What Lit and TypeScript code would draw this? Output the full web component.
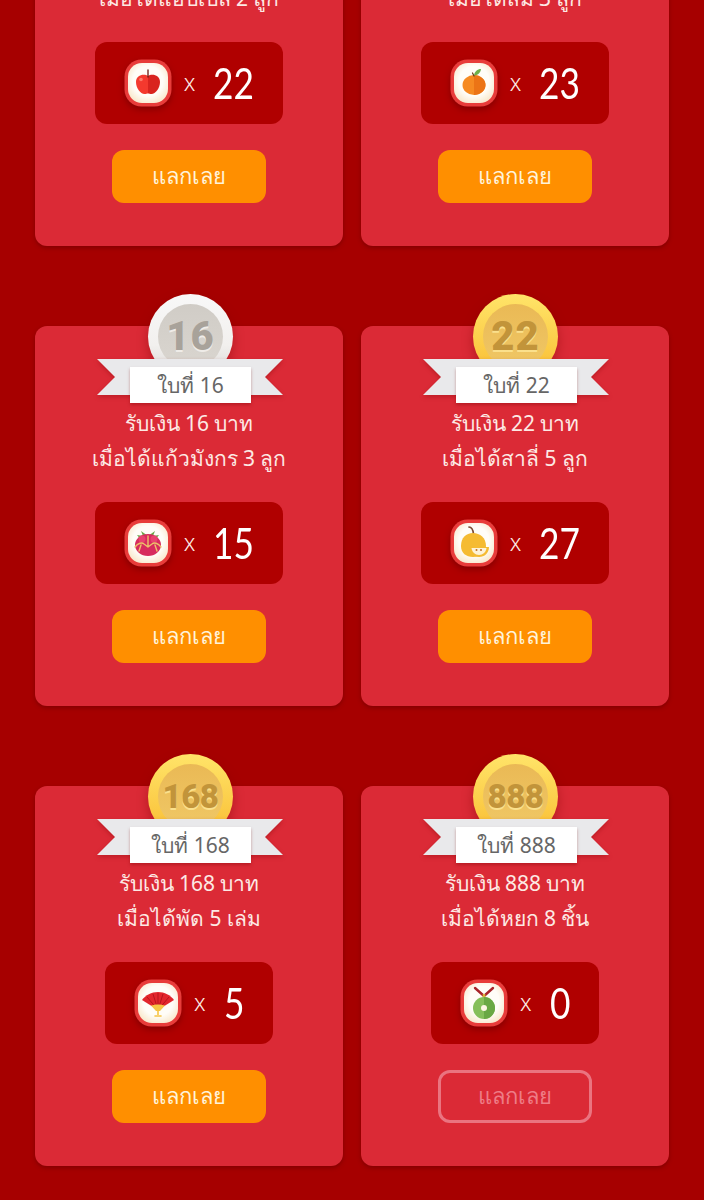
import { LitElement, html, css, svg } from "lit";
import { customElement } from "lit/decorators.js";

type Reward = {
  no?: string;
  tier?: "silver" | "gold";
  lines: string[];
  item: string;
  count: string;
  off?: boolean;
};

const icons: Record<string, unknown> = {
  apple: svg`
    <path d="M24 17c-3-2.500-12-2-12 6 0 6 4.500 12 8.500 12 1.500 0 2.500-.6 3.500-.6z" fill="#f4392e"/>
    <path d="M24 17c3-2.500 12-2 12 6 0 6-4.500 12-8.500 12-1.500 0-2.500-.6-3.500-.6z" fill="#d9241f"/>
    <circle cx="17" cy="20.500" r="1.800" fill="#fb7a6c"/>
    <path d="M24 11v7" stroke="#6a1a12" stroke-width="1.300" stroke-linecap="round"/>`,
  orange: svg`
    <ellipse cx="24" cy="26" rx="11.500" ry="10" fill="#f68a22"/>
    <path d="M24 16c6.500 0 11.500 4.500 11.500 10S30.500 36 24 36z" fill="#ec7416"/>
    <path d="M24 16.500c.5-4 3.500-6.500 7-6.500-.5 4-3.500 6.500-7 6.500z" fill="#6fb04a"/>
    <path d="M22.500 14l1.500 3" stroke="#6a3a1a" stroke-width="1.200" stroke-linecap="round"/>`,
  dragon: svg`
    <path d="M24 17l-7-5 2 5-6-1 4 5h14l4-5-6 1 2-5z" fill="#6aa84a"/>
    <ellipse cx="24" cy="26" rx="13" ry="11" fill="#d72b5e"/>
    <circle cx="18" cy="20" r="3.500" fill="#e8426f"/>
    <circle cx="30" cy="20" r="3.500" fill="#e8426f"/>
    <path d="M11 28c3-4 7-5 9-3l4 3 4-3c2-2 6-1 9 3M17 26l-2 6M31 26l2 6M24 17v11" fill="none" stroke="#edc06a" stroke-width="1.400" stroke-linecap="round" stroke-linejoin="round"/>`,
  pear: svg`
    <path d="M19 8c2.500 0 4 2.500 4.500 7" fill="none" stroke="#7a4a32" stroke-width="1.700" stroke-linecap="round"/>
    <path d="M23 14c7 0 13 5 13 13 0 6-6 11-13 11s-12-4-12-11c0-8 5-13 12-13z" fill="#f5bb32"/>
    <path d="M19 28h20c0 6-4.500 10-10 10s-10-4-10-10z" fill="#f5bb32"/>
    <path d="M21.500 29h15c-.5 4-3.500 7-7.500 7s-7-3-7.500-7z" fill="#fdf3d8"/>
    <circle cx="26.500" cy="31" r="1" fill="#c0702a"/><circle cx="31" cy="31" r="1" fill="#c0702a"/>`,
  fan: svg`
    <path d="M24 31L8 21c3.500-5 9.500-8 16-8s12.500 3 16 8z" fill="#e2262c"/>
    <path d="M24 31l-11-13M24 31l-5-16M24 31V14M24 31l5-16M24 31l11-13" stroke="#b8141c" stroke-width="1"/>
    <path d="M17 26.500c4-1.500 10-1.500 14 0L26 32h-4z" fill="#f6c445"/>
    <path d="M24 32v4" stroke="#f6c445" stroke-width="1.600"/>
    <path d="M21 37h6" stroke="#f6c445" stroke-width="1.600" stroke-linecap="round"/>`,
  jade: svg`
    <path d="M15 9l9 8 9-8" fill="none" stroke="#a8242a" stroke-width="2.400" stroke-linecap="round" stroke-linejoin="round"/>
    <path d="M24 15v7" stroke="#d9b23a" stroke-width="2.600"/>
    <circle cx="24" cy="29" r="11" fill="#86bf5a"/>
    <path d="M24 18a11 11 0 0 1 0 22z" fill="#6aa844"/>
    <circle cx="24" cy="29" r="3" fill="#fdf6e3"/>`,
};

const rewards: Reward[] = [
  { lines: ["เมื่อได้แอปเปิล 2 ลูก"], item: "apple", count: "22" },
  { lines: ["เมื่อได้ส้ม 3 ลูก"], item: "orange", count: "23" },
  { no: "16", tier: "silver", lines: ["รับเงิน 16 บาท", "เมื่อได้แก้วมังกร 3 ลูก"], item: "dragon", count: "15" },
  { no: "22", tier: "gold", lines: ["รับเงิน 22 บาท", "เมื่อได้สาลี่ 5 ลูก"], item: "pear", count: "27" },
  { no: "168", tier: "gold", lines: ["รับเงิน 168 บาท", "เมื่อได้พัด 5 เล่ม"], item: "fan", count: "5" },
  { no: "888", tier: "gold", lines: ["รับเงิน 888 บาท", "เมื่อได้หยก 8 ชิ้น"], item: "jade", count: "0", off: true },
];

@customElement("app-root")
export class AppRoot extends LitElement {
  static styles = css`
    :host {
      display: block;
      height: 1200px;
      overflow: hidden;
      background: #a60000;
      font-family: "Noto Sans", "Open Sans", sans-serif;
    }
    .grid {
      display: grid;
      grid-template-columns: 308px 308px;
      grid-auto-rows: 380px;
      gap: 80px 18px;
      padding-left: 35px;
      margin-top: -134px;
    }
    .card {
      position: relative;
      display: flex;
      flex-direction: column;
      align-items: center;
      background: #db2a36;
      border-radius: 12px;
      box-shadow: 0 2px 4px rgba(90, 0, 0, 0.45);
    }
    .medal {
      position: absolute;
      top: -32px;
      left: 112px;
      width: 85px;
      height: 85px;
      border-radius: 50%;
      display: flex;
      align-items: center;
      justify-content: center;
      box-shadow: 0 5px 12px rgba(120, 0, 0, 0.4);
    }
    .card:nth-child(odd) .medal { left: 113px; }
    .medal.silver { background: linear-gradient(#f8f8f8, #f2f0ee 60%, #d8d6d4); }
    .medal.gold { background: linear-gradient(#ffe469, #fbc842 70%, #f5b631); }
    .disc {
      width: 65px;
      height: 65px;
      border-radius: 50%;
      display: flex;
      align-items: center;
      justify-content: center;
      font-family: "Roboto", sans-serif;
      font-weight: 900;
      font-size: 40px;
      letter-spacing: 1px;
      margin-top: -1px;
    }
    .disc.long { font-size: 33px; letter-spacing: -0.500px; }
    .silver .disc { background: linear-gradient(#d0ccc6, #dad6d0); color: #a8a29a; text-shadow: 0 1.500px 0 #efece8; }
    .gold .disc { background: linear-gradient(#eab955, #f0c866); color: #c2943a; text-shadow: 0 1.500px 0 #fbe08c; }
    .ribbon {
      position: absolute;
      top: 33px;
      left: 61.500px;
      width: 186px;
      height: 36px;
      filter: drop-shadow(0 2px 2px rgba(120, 0, 0, 0.3));
    }
    .label {
      position: absolute;
      top: 41px;
      left: 95px;
      width: 121px;
      height: 36px;
      display: flex;
      align-items: center;
      justify-content: center;
      background: #fff;
      color: #666;
      font-size: 21px;
      box-shadow: 0 2px 3px rgba(120, 0, 0, 0.35);
    }
    .text {
      height: 176px;
      box-sizing: border-box;
      padding-top: 80px;
      color: #fde9e4;
      font-size: 21px;
      line-height: 35px;
      text-align: center;
      white-space: nowrap;
    }
    .text.cut { padding-top: 115px; }
    .box {
      display: flex;
      align-items: center;
      height: 82px;
      padding: 0 29px;
      border-radius: 12px;
      background: #b00000;
      color: #fff;
    }
    .icon {
      width: 48px;
      height: 48px;
      flex: none;
      filter: drop-shadow(0 3px 3px rgba(90, 0, 0, 0.5));
    }
    .times {
      margin: -3px 18px 0 12px;
      font-size: 23px;
      font-weight: 300;
      color: #fdeee8;
    }
    .count {
      font-family: "Lato", sans-serif;
      font-size: 42px;
      font-weight: 400;
      line-height: 1;
      white-space: nowrap;
    }
    .count span {
      display: inline-block;
      transform: scaleX(0.84);
      transform-origin: left center;
    }
    .go {
      width: 154px;
      height: 53px;
      margin-top: 26px;
      box-sizing: border-box;
      display: flex;
      align-items: center;
      justify-content: center;
      border-radius: 12px;
      background: #ff8f00;
      color: #fff3d9;
      font-size: 22px;
    }
    .go.off {
      background: none;
      border: 3px solid #ea7480;
      color: #ee7c86;
    }
  `;

  private itemIcon(name: string) {
    return html`<svg class="icon" viewBox="0 0 48 48">
      <defs>
        <radialGradient id="cream" cx="50%" cy="45%" r="62%">
          <stop offset="0.6" stop-color="#fffdf8"/>
          <stop offset="1" stop-color="#f8e6c8"/>
        </radialGradient>
      </defs>
      <rect x="0.500" y="0.500" width="47" height="47" rx="17" fill="#e83c3a"/>
      <rect x="4" y="4" width="40" height="40" rx="14" fill="url(#cream)"/>
      ${icons[name]}
    </svg>`;
  }

  private renderCard(r: Reward) {
    return html`<div class="card">
      ${r.no
        ? html`<div class="medal ${r.tier}"><div class="disc ${r.no.length > 2 ? "long" : ""}">${r.no}</div></div>
            <svg class="ribbon" viewBox="0 0 186 36">
              <path d="M0 0H186L168 18L186 36H0L18 18Z" fill="#e9e9eb"/>
            </svg>
            <div class="label">ใบที่ ${r.no}</div>`
        : ""}
      <div class="text ${r.no ? "" : "cut"}">${r.lines.map((l) => html`<div>${l}</div>`)}</div>
      <div class="box">
        ${this.itemIcon(r.item)}
        <span class="times">x</span>
        <span class="count" style="width:${r.count.length * 20.500}px"><span>${r.count}</span></span>
      </div>
      <div class="go ${r.off ? "off" : ""}">แลกเลย</div>
    </div>`;
  }

  render() {
    return html`<div class="grid">${rewards.map((r) => this.renderCard(r))}</div>`;
  }
}
